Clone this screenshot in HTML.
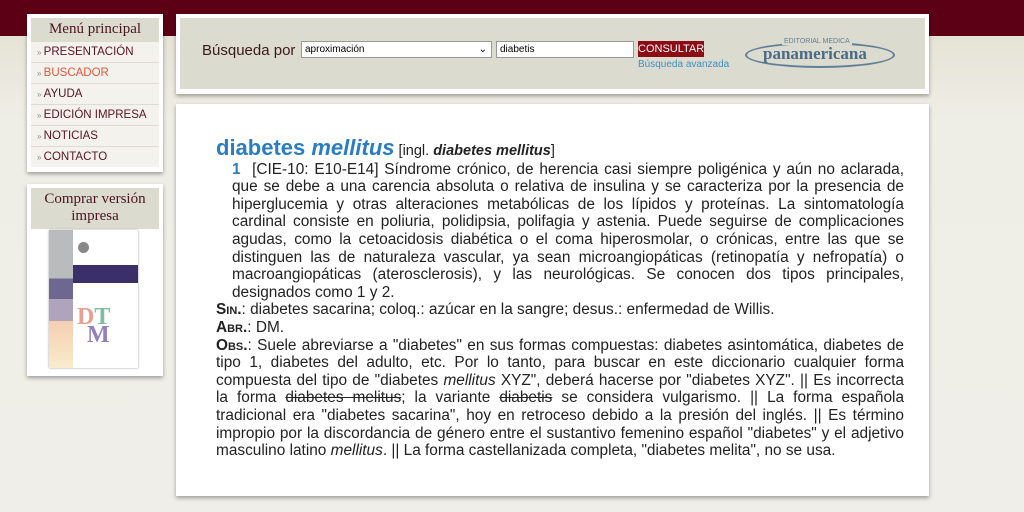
<!DOCTYPE html>
<html><head><meta charset="utf-8"><style>
body{margin:0;width:1024px;height:512px;overflow:hidden;font-family:"Liberation Sans",sans-serif;background:linear-gradient(#e6e3d6 38px,#efeee6 120px,#efeee8);position:relative}
.top{position:absolute;left:0;top:0;width:1024px;height:36px;background:#5c0016}
.card{position:absolute;background:#fff;box-shadow:0 2px 4px rgba(0,0,0,.35)}
.m1{left:27px;top:14px;width:136px;height:158px}
.m1 h3,.m2 h3{margin:4px 4px 0;background:#dcdbcf;font:normal 15px "Liberation Serif",serif;color:#4a1420;text-align:center;padding:3px 0 4px}
.m1 ul{list-style:none;margin:0 4px;padding:0;background:#f3f2ec}
.m1 li{font-size:11.5px;color:#5c1220;height:20px;line-height:20px;border-bottom:1px solid #dedcd2;padding-left:6px}
.m1 li:before{content:"» ";font-size:8px;color:#888}
.m2{left:27px;top:184px;width:136px;height:192px}
.m2 h3{line-height:17px}
.s{left:176px;top:14px;width:753px;height:80px}
.s .in{position:absolute;left:4px;top:4px;right:4px;bottom:5px;background:#dcdbd0}
.main{left:176px;top:104px;width:753px;height:392px}
.txt{position:absolute;left:40px;top:35px;width:688px;font-size:15.4px;line-height:17.6px;color:#222;text-align:justify}
.sc{font-variant:small-caps;font-weight:bold}
</style></head><body>
<div class="top"></div>
<div class="card m1"><h3>Menú principal</h3><ul><li>PRESENTACIÓN</li><li style="color:#e4573c">BUSCADOR</li><li>AYUDA</li><li>EDICIÓN IMPRESA</li><li>NOTICIAS</li><li style="border:0">CONTACTO</li></ul></div>
<div class="card m2"><h3>Comprar versión<br>impresa</h3>
<div style="position:absolute;left:22px;top:46px;width:89px;height:138px;background:#fff;box-shadow:0 0 2px #999">
<div style="position:absolute;left:0;top:0;width:24px;height:138px;background:linear-gradient(#b9bcbc 0,#b9bcbc 35%,#6e6890 35%,#6e6890 50%,#b0a4bc 50%,#b0a4bc 66%,#f4cfb0 66%,#f8eccc)"></div>
<div style="position:absolute;left:24px;top:35px;width:65px;height:18px;background:#3b2f6a"></div>
<div style="position:absolute;left:29px;top:12px;width:11px;height:11px;border-radius:50%;background:#888"></div>
<div style="position:absolute;left:28px;top:74px;font:bold 24px 'Liberation Serif',serif;color:#e8a090">D<span style="color:#7fbfa0">T</span></div>
<div style="position:absolute;left:38px;top:92px;font:bold 24px 'Liberation Serif',serif;color:#9080c0">M</div>
</div></div>
<div class="card s"><div class="in">
<span style="position:absolute;left:22px;top:24px;font-size:15px;color:#3a1a1a">Búsqueda por</span>
<div style="position:absolute;left:121px;top:23px;width:186px;height:15px;background:#fff;border:1px solid #999;font-size:10px;line-height:15px;padding-left:3px">aproximación<span style="position:absolute;right:4px">⌄</span></div>
<div style="position:absolute;left:316px;top:23px;width:133px;height:15px;background:#fff;border:1px solid #999;font-size:10px;line-height:15px;padding-left:3px">diabetis</div>
<div style="position:absolute;left:458px;top:23px;width:66px;height:16px;background:#8c0b14;color:#fff;font-size:11px;line-height:16px;text-align:center">CONSULTAR</div>
<span style="position:absolute;left:458px;top:41px;font-size:10px;color:#3d8fc7">Búsqueda avanzada</span>
<div style="position:absolute;left:565px;top:24px;width:146px;height:22px;border:2px solid #5f7f98;border-radius:50%"></div>
<span style="position:absolute;left:602px;top:20px;font-size:7px;color:#5f7f98;background:#dcdbd0;padding:0 2px">EDITORIAL MEDICA</span>
<span style="position:absolute;left:583px;top:26px;font:bold 17px 'Liberation Serif',serif;color:#4a6a85">panamericana</span>
</div></div>
<div class="card main"><div class="txt">
<div style="font-size:14.5px"><b style="font-size:22px;color:#2a7dbf">diabetes <i>mellitus</i></b> [ingl. <b><i>diabetes mellitus</i></b>]</div>
<div style="padding-left:16px"><b style="color:#2a7dbf">1</b>&nbsp; [CIE-10: E10-E14] Síndrome crónico, de herencia casi siempre poligénica y aún no aclarada, que se debe a una carencia absoluta o relativa de insulina y se caracteriza por la presencia de hiperglucemia y otras alteraciones metabólicas de los lípidos y proteínas. La sintomatología cardinal consiste en poliuria, polidipsia, polifagia y astenia. Puede seguirse de complicaciones agudas, como la cetoacidosis diabética o el coma hiperosmolar, o crónicas, entre las que se distinguen las de naturaleza vascular, ya sean microangiopáticas (retinopatía y nefropatía) o macroangiopáticas (aterosclerosis), y las neurológicas. Se conocen dos tipos principales, designados como 1 y 2.</div>
<div><span class="sc">Sin.</span>: diabetes sacarina; coloq.: azúcar en la sangre; desus.: enfermedad de Willis.</div>
<div><span class="sc">Abr.</span>: DM.</div>
<div><span class="sc">Obs.</span>: Suele abreviarse a "diabetes" en sus formas compuestas: diabetes asintomática, diabetes de tipo 1, diabetes del adulto, etc. Por lo tanto, para buscar en este diccionario cualquier forma compuesta del tipo de "diabetes <i>mellitus</i> XYZ", deberá hacerse por "diabetes XYZ". || Es incorrecta la forma <s>diabetes melitus</s>; la variante <s>diabetis</s> se considera vulgarismo. || La forma española tradicional era "diabetes sacarina", hoy en retroceso debido a la presión del inglés. || Es término impropio por la discordancia de género entre el sustantivo femenino español "diabetes" y el adjetivo masculino latino <i>mellitus</i>. || La forma castellanizada completa, "diabetes melita", no se usa.</div>
</div></div>
</body></html>
